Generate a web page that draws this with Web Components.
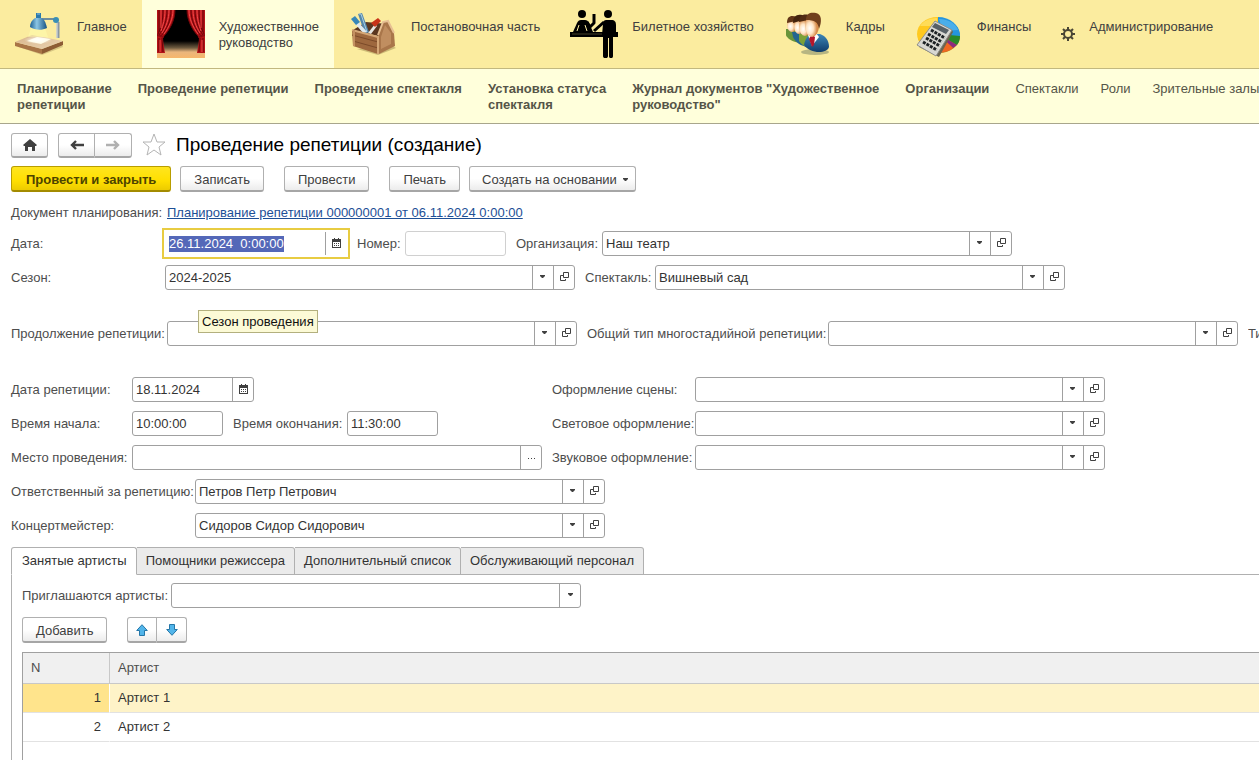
<!DOCTYPE html>
<html lang="ru">
<head>
<meta charset="UTF-8">
<title>Проведение репетиции (создание)</title>
<style>
  :root {
    --bar: #fbec9f;
    --bar-light: #ffffdb;
    --text: #404040;
    --label: #4d4d4d;
    --line: #a0a0a0;
    --accent: #e8cc42;
  }
  html, body { height: 100%; }
  body {
    margin: 0;
    overflow: hidden;
    background: #fff;
    color: var(--text);
    font: 13px/16px "Liberation Sans", Arial, sans-serif;
  }
</style>
</head>
<body>
<rehearsal-app></rehearsal-app>

<script>
const ICONS = {
  lamp: { size: [48, 48], body: `
    <defs>
      <linearGradient id="wood" x1="0" y1="0" x2="1" y2="1"><stop offset="0" stop-color="#d8b48a"/><stop offset="1" stop-color="#ead3b2"/></linearGradient>
      <linearGradient id="shade" x1="0" y1="0" x2="1" y2="0"><stop offset="0" stop-color="#1b5f94"/><stop offset=".4" stop-color="#8cc6e4"/><stop offset="1" stop-color="#155283"/></linearGradient>
      <radialGradient id="glow"><stop offset="0" stop-color="#fff"/><stop offset="1" stop-color="#fff" stop-opacity="0"/></radialGradient>
    </defs>
    <path d="M4 37 27 45 48 37 46 33z" fill="#b59f66" opacity=".5"/>
    <path d="M0 32v4l27 8v-5z" fill="#a87446"/><path d="M27 39v5l21-9v-4z" fill="#8d5c34"/>
    <path d="M0 32 17 25 48 31 27 39z" fill="url(#wood)"/>
    <path d="m12 31 10-4 14 2-10 5z" fill="#fffbe0"/>
    <ellipse cx="23" cy="30" rx="14" ry="4" fill="url(#glow)"/>
    <path d="M16 18 13 27h20l-3-9z" fill="#fffdb0" opacity=".5"/>
    <path d="M43 12v16" stroke="#8a97a3" stroke-width="3"/><path d="M42 12v16" stroke="#e0e6ea"/>
    <path d="M27 9h14" stroke="#708d9c" stroke-width="2"/>
    <circle cx="41" cy="10" r="3" fill="#3a8fb5"/>
    <path d="M21 3h5v6h-5z" fill="#2b79ac"/><path d="M22 4h3" stroke="#8ac2e0"/>
    <path d="M20 8h7c3 2 4 6 5 10-6 3-12 2-17-1 0-4 2-7 5-9z" fill="url(#shade)"/>` },
  curtain: { size: [48, 48], body: `
    <defs>
      <linearGradient id="floor" x1="0" y1="0" x2="0" y2="1"><stop offset="0" stop-color="#000"/><stop offset=".4" stop-color="#6e5b40"/><stop offset=".65" stop-color="#eab67c"/><stop offset="1" stop-color="#f7b76b"/></linearGradient>
      <g id="drape">
        <path d="M0 0h18c0 10-5 20-12 27 0 5 1 10 2 16H0z" fill="#b51217"/>
        <path d="M2 0v22M6 0c0 10-2 18-5 24M10 0c0 10-3 18-8 25M14 0c0 10-4 19-10 26M18 0c0 10-5 20-12 27M2 28v14M5 28l1 14" fill="none" stroke="#6a0509" stroke-width="1"/>
        <path d="M4 0v18M8 0c0 9-2 15-4 21M12 0c0 9-3 17-7 23M16 0c0 9-4 17-9 24M3 30v12" fill="none" stroke="#ef4b49" stroke-width="1"/>
        <path d="m0 25 7 2" stroke="#8d0a10" stroke-width="2"/>
      </g>
    </defs>
    <path d="M0 0h48v48H0z"/><path d="M0 31h48v17H0z" fill="url(#floor)"/>
    <use href="#drape"/><use href="#drape" transform="matrix(-1 0 0 1 48 0)"/>` },
  toolbox: { size: [48, 48], body: `
    <path d="m8 39 21 6 18-7-5-3z" fill="#a08a50" opacity=".5"/>
    <path d="m4 20 25 6 10-12L17 12z" fill="#5b3720"/>
    <path d="m9 4 4-1 7 19-4 2z" fill="#5587ab"/><path d="m10 4 2 0 6 18" fill="none" stroke="#a7cde2"/>
    <path d="m3 10 3-2 12 14-4 1z" fill="#dfe9ee"/><path d="m2 9 4-3 5 6-4 3z" fill="#3787b8"/>
    <path d="m19 23 7-9 2 2-6 8z" fill="#e7e7e2"/><path d="m22 13 7-5 3 3-6 6z" fill="#c73318"/>
    <path d="m29 25 5-13 5-1 6 12 1 13-16 8z" fill="#a9764a"/>
    <path d="m32 27 4-12 6 8v11l-10 5z" fill="#c08e60"/>
    <path d="m29 25 5-13 5-1 6 12" fill="none" stroke="#e7c093" stroke-width="2"/>
    <path d="M3 20 29 27v17L4 36z" fill="#9e683e"/>
    <path d="m3 25 26 7M4 31l25 7" stroke="#7b4a29"/><path d="M3 20 29 27v17" fill="none" stroke="#d5a777" stroke-width="2"/><path d="m5 20v16" stroke="#c39061" stroke-width="2"/>` },
  counter: { size: [48, 48], body: `
    <circle cx="12" cy="4" r="4"/><circle cx="38" cy="4" r="4"/>
    <path d="M0 22h48v5H0z"/>
    <path d="m3 22 4-9c1-2 2-3 4-3h4c2 0 3 1 4 3l4 9z"/>
    <path d="m17 12 3 5 4-4V4" fill="none" stroke="#000" stroke-width="3" stroke-linejoin="round"/>
    <path d="m24 21 10-9" stroke="#000" stroke-width="3"/>
    <path d="M33 14c0-3 1-4 4-4h4c4 0 5 2 5 5v10H32z"/>
    <path d="M33 27h10v19c0 3-4 3-4 0V28h-1v18c0 3-5 3-5 0z"/>
    <path d="m7 21 2-6m8 6-2-6" stroke="#fbec9f"/>
    <path d="M2 24h30" stroke="#45402a"/>` },
  people: { size: [48, 48], body: `
    <defs>
      <radialGradient id="face" cx=".35" cy=".6"><stop offset="0" stop-color="#fff"/><stop offset=".5" stop-color="#ffe6c8"/><stop offset="1" stop-color="#d88d4c"/></radialGradient>
      <linearGradient id="suit" x1="0" y1="0" x2="0" y2="1"><stop offset="0" stop-color="#3d87b7"/><stop offset="1" stop-color="#103c6b"/></linearGradient>
    </defs>
    <ellipse cx="31" cy="42" rx="14" ry="3" fill="#8b9170" opacity=".6"/>
    <path d="M2 19h11l5 14C8 33 2 27 2 25z" fill="#69943a"/><ellipse cx="8" cy="15" rx="5" ry="7" fill="url(#face)"/><path d="M3 13c0-7 4-8 10-6l-1 4z" fill="#613517"/>
    <path d="M8 22h13l4 15c-9 0-15-7-16-10z" fill="#24658f"/><ellipse cx="15" cy="16" rx="5" ry="8" fill="url(#face)"/><path d="M9 13c0-8 5-10 12-7l-2 4z" fill="#43240f"/>
    <path d="M15 24h12l4 15c-8 0-13-4-16-8z" fill="#7ca138"/><ellipse cx="21" cy="17" rx="6" ry="9" fill="url(#face)"/><path d="M15 12c0-8 6-9 13-6l-4 4z" fill="#512b13"/>
    <path d="M20 35c1-6 4-10 8-11h8c6 2 9 7 9 13-2 7-19 7-25-2z" fill="url(#suit)"/>
    <path d="m24 25 4 11 7-9-3-4z" fill="#fff"/><path d="m26 27 2-2 3 2-1 8-2 2-3-8z" fill="#b3172b"/>
    <ellipse cx="28" cy="16" rx="7" ry="11" fill="url(#face)"/><path d="M22 10c0-7 5-8 10-7 6 1 6 9 3 16-1-7-4-9-13-9z" fill="#71401d"/>` },
  finance: { size: [48, 48], body: `
    <ellipse cx="24" cy="26" rx="21" ry="17" fill="#b57b20"/>
    <path d="M23 24V7C10 7 2 15 2 24c0 4 2 8 5 11z" fill="#ffc91f"/><path d="M5 16c3-5 9-8 17-8v8z" fill="#ffe46f" opacity=".7"/>
    <path d="M23 24V7c12 0 21 8 22 17v3z" fill="#2495df"/><path d="M24 9c10 0 17 5 19 11l-15 1z" fill="#64bff2" opacity=".6"/>
    <path d="m23 24 22 2c0 4-1 6-3 9z" fill="#29892a"/><path d="m23 24 19 11-4 3z" fill="#8d2a80"/>
    <path d="m23 24 15 14c-4 4-11 5-17 4z" fill="#f06722"/>
    <path d="m4 37 20 10 14-25-1-2z" fill="#6b6550"/>
    <path d="M20 11 37 20 21 46 2 35z" fill="#d8d8d3" stroke="#8e8e89"/>
    <path d="m20 13 14 7-3 4-14-7z" fill="#576066"/>
    <path d="m16 20 14 8m-17-4 14 8M11 28l14 8M8 32l14 8" stroke="#1d2225" stroke-width="3" stroke-dasharray="3 1"/>` },
  gear: { size: [14, 14], body: `
    <path d="M7 0v3m0 8v3M0 7h3m8 0h3M2 2l2 2m6 6 2 2m0-10-2 2m-6 6-2 2" stroke="#4a4635" stroke-width="2"/>
    <circle cx="7" cy="7" r="4" fill="none" stroke="#4a4635" stroke-width="2"/>` },
  home: { size: [14, 12], body: `<path d="m7 0 7 6-1 1h-1v5H9V8H5v4H2V7H1L0 6z" fill="#404040"/>` },
  back: { size: [14, 10], body: `<path d="M14 5H2M6 1 2 5l4 4" fill="none" stroke="#404040" stroke-width="2.4"/>` },
  forward: { size: [14, 10], body: `<path d="M0 5h12M8 1l4 4-4 4" fill="none" stroke="#b0b0b0" stroke-width="2.4"/>` },
  star: { size: [24, 24], body: `<path d="m12 1 3 8h8l-6 5 2 8-7-5-7 5 2-8-6-5h8z" fill="#fff" stroke="#b4b4b4"/>` },
  caret: { size: [5, 3], body: `<path d="M0 0h5v1L3 3H2L0 1z" fill="#404040"/>` },
  open: { size: [9, 9], body: `<path d="M3 3.5H.5v5h5V7M3.5.5h5v5h-5z" fill="none" stroke="#404040"/>` },
  calendar: { size: [9, 10], body: `<path d="M0 1h9v9H0zM1 4v5h7V4z" fill="#404040" fill-rule="evenodd"/><path d="M2 0h1v2H2zM6 0h1v2H6zM2 5h1v1H2zM4 5h1v1H4zM6 5h1v1H6zM2 7h1v1H2zM4 7h1v1H4zM6 7h1v1H6z" fill="#404040"/>` },
  dots: { size: [7, 5], body: `<path d="M0 4h1v1H0zM3 4h1v1H3zM6 4h1v1H6z" fill="#404040"/>` },
  up: { size: [12, 12], body: `<path d="m6 .7 5.3 5.8H8.5v5h-5v-5H.7z" fill="#52b5ea" stroke="#2577a8"/>` },
  down: { size: [12, 12], body: `<path d="M6 11.3.7 5.5h2.8v-5h5v5h2.8z" fill="#52b5ea" stroke="#2577a8"/>` }
};

class AppIcon extends HTMLElement {
  connectedCallback() {
    if (this.shadowRoot) return;
    this.attachShadow({ mode: 'open' });
    const icon = ICONS[this.getAttribute('name')];
    const [w, h] = icon.size;
    this.shadowRoot.innerHTML = `
      <style>
        :host { display: block; flex: none; width: ${w}px; height: ${h}px; }
        svg { display: block; }
      </style>
      <svg width="${w}" height="${h}" viewBox="0 0 ${w} ${h}" aria-hidden="true">${icon.body}</svg>
    `;
  }
}
customElements.define('app-icon', AppIcon);

class SectionItem extends HTMLElement {
  connectedCallback() {
    if (this.shadowRoot) return;
    this.attachShadow({ mode: 'open' });
    this.shadowRoot.innerHTML = `
      <style>
        :host { display: block; flex: none; }
        a {
          display: flex;
          gap: 14px;
          box-sizing: border-box;
          height: 68px;
          padding: 10px 15px;
          color: var(--text);
          text-decoration: none;
          white-space: nowrap;
        }
        :host([active]) a { background: var(--bar-light); }
        app-icon { align-self: center; }
        span { padding-top: 9px; }
      </style>
      <a href="#"><app-icon name="${this.getAttribute('icon')}"></app-icon><span><slot></slot></span></a>
    `;
  }
}
customElements.define('section-item', SectionItem);

class SectionPanel extends HTMLElement {
  connectedCallback() {
    if (this.shadowRoot) return;
    this.attachShadow({ mode: 'open' });
    this.shadowRoot.innerHTML = `
      <style>
        :host { display: block; background: var(--bar); border-bottom: 1px solid #c2b87f; }
        nav { display: flex; }
      </style>
      <nav aria-label="Разделы"><slot></slot></nav>
    `;
  }
}
customElements.define('section-panel', SectionPanel);

class FunctionPanel extends HTMLElement {
  connectedCallback() {
    if (this.shadowRoot) return;
    this.attachShadow({ mode: 'open' });
    this.shadowRoot.innerHTML = `
      <style>
        :host { display: block; background: var(--bar-light); border-bottom: 1px solid #a8a68c; }
        nav { display: flex; gap: 22px; height: 32px; padding: 12px 0 10px 17px; white-space: nowrap; }
        ::slotted(a) { flex: none; color: #555548; text-decoration: none; }
        ::slotted(a.main) { padding-right: 4px; font-weight: bold; }
      </style>
      <nav aria-label="Команды раздела"><slot></slot></nav>
    `;
  }
}
customElements.define('function-panel', FunctionPanel);

class AppButton extends HTMLElement {
  connectedCallback() {
    if (this.shadowRoot) return;
    this.attachShadow({ mode: 'open' });
    const icon = this.getAttribute('icon');
    const title = this.getAttribute('label');
    this.shadowRoot.innerHTML = `
      <style>
        :host { display: block; flex: none; }
        button {
          display: flex;
          align-items: center;
          justify-content: center;
          gap: 6px;
          box-sizing: border-box;
          width: 100%;
          height: 26px;
          padding: 2px 13px 0;
          border: 1px solid #b0b0b0;
          border-bottom: 2px solid #a6a6a6;
          border-radius: 3px;
          background: linear-gradient(#fff 50%, #ececec);
          color: var(--text);
          font: inherit;
          white-space: nowrap;
        }
        :host([small]) button { height: 25px; padding: 0; }
        :host([menu]) button { padding: 2px 7px 0 12px; }
        :host([primary]) button {
          padding: 2px 14px 0;
          border-color: #b89d00 #b89d00 #a38b00;
          background: linear-gradient(#ffe51f, #ffdf00 60%, #eccb00);
          color: #4d4300;
          font-weight: bold;
        }
        :host([joined]) button { padding: 0; }
        :host([joined=left]) button { border-radius: 3px 0 0 3px; }
        :host([joined=right]) button { border-left: 0; border-radius: 0 3px 3px 0; }
      </style>
      <button type="button" ${title ? `aria-label="${title}"` : ''}>${icon ? `<app-icon name="${icon}"></app-icon>` : ''}<slot></slot>${this.hasAttribute('menu') ? '<app-icon name="caret"></app-icon>' : ''}</button>
    `;
  }
}
customElements.define('app-button', AppButton);

const FIELD_BUTTONS = {
  caret: 'Выбрать из списка',
  open: 'Открыть',
  calendar: 'Календарь',
  dots: 'Выбрать'
};

class FormField extends HTMLElement {
  connectedCallback() {
    if (this.shadowRoot) return;
    this.attachShadow({ mode: 'open' });
    const buttons = (this.getAttribute('buttons') || '').split(' ').filter(Boolean);
    this.shadowRoot.innerHTML = `
      <style>
        :host { display: flex; flex: none; align-items: center; }
        label { flex: none; width: var(--label-width, auto); color: var(--label); white-space: nowrap; }
        .box {
          display: flex;
          box-sizing: border-box;
          width: var(--field-width, 410px);
          height: 25px;
          border: 1px solid var(--line);
          border-radius: 3px;
          background: #fff;
        }
        input {
          flex: 1;
          min-width: 0;
          padding: 0 3px;
          border: 0;
          outline: 0;
          background: none;
          color: #333;
          font: inherit;
        }
        input::selection { background: #5468b8; color: #fff; }
        button {
          display: flex;
          align-items: center;
          justify-content: center;
          box-sizing: border-box;
          width: 21px;
          padding: 0 1px 2px 0;
          border: 0;
          border-left: 1px solid var(--line);
          background: none;
        }
        button:last-child { padding-right: 0; }
        :host([muted]) .box { border-color: #d0d0d0; }
        :host([current]) .box { border-color: transparent; outline: 2px solid var(--accent); outline-offset: 1px; border-radius: 0; }
      </style>
      <label for="field">${this.getAttribute('label')}:</label>
      <div class="box">
        <input id="field" type="text" autocomplete="off" spellcheck="false" value="${this.getAttribute('value') || ''}">
        ${buttons.map(b => `<button type="button" aria-label="${FIELD_BUTTONS[b]}"><app-icon name="${b}"></app-icon></button>`).join('')}
      </div>
    `;
    if (this.hasAttribute('current')) {
      const input = this.shadowRoot.querySelector('input');
      input.focus();
      input.select();
    }
  }
}
customElements.define('form-field', FormField);

class HintBox extends HTMLElement {
  connectedCallback() {
    if (this.shadowRoot) return;
    this.attachShadow({ mode: 'open' });
    this.shadowRoot.innerHTML = `
      <style>
        :host {
          display: block;
          padding: 3px;
          border: 1px solid #b3b07e;
          background: #fcfad6;
          color: #111;
          line-height: 15px;
          white-space: nowrap;
        }
      </style>
      <div role="tooltip"><slot></slot></div>
    `;
  }
}
customElements.define('hint-box', HintBox);

class TabPages extends HTMLElement {
  connectedCallback() {
    if (this.shadowRoot) return;
    this.attachShadow({ mode: 'open' });
    const tabs = this.getAttribute('tabs').split('|');
    this.shadowRoot.innerHTML = `
      <style>
        :host { display: flex; flex-direction: column; }
        .tabs { display: flex; box-shadow: inset 0 -1px #b0b0b0; }
        button {
          height: 28px;
          padding: 0 9px;
          border: 1px solid #b0b0b0;
          border-left-width: 0;
          border-radius: 0 3px 0 0;
          background: #ebebeb;
          color: #333;
          font: inherit;
          white-space: nowrap;
        }
        button:first-child { padding-left: 10px; border-left-width: 1px; border-top-left-radius: 3px; }
        button[aria-selected=true] { background: #fff; border-bottom-color: #fff; }
        .page {
          display: flex;
          flex: 1;
          flex-direction: column;
          gap: 9px;
          padding: 8px 0 0 10px;
          border-left: 1px solid #b0b0b0;
        }
      </style>
      <div class="tabs" role="tablist">
        ${tabs.map((t, i) => `<button type="button" role="tab" aria-selected="${i === 0}">${t}</button>`).join('')}
      </div>
      <div class="page" role="tabpanel"><slot></slot></div>
    `;
    const buttons = this.shadowRoot.querySelectorAll('[role=tab]');
    buttons.forEach(btn => btn.addEventListener('click', () => {
      buttons.forEach(b => b.setAttribute('aria-selected', b === btn));
    }));
  }
}
customElements.define('tab-pages', TabPages);

class ArtistTable extends HTMLElement {
  connectedCallback() {
    if (this.shadowRoot) return;
    this.attachShadow({ mode: 'open' });
    const rows = this.getAttribute('rows').split('|');
    this.shadowRoot.innerHTML = `
      <style>
        :host { display: block; border: 1px solid var(--line); border-width: 1px 0 0 1px; }
        table { width: 100%; border-collapse: separate; border-spacing: 0; table-layout: fixed; }
        th {
          height: 30px;
          padding: 0 8px;
          border-bottom: 1px solid #c8c8c8;
          background: #f0f0f0;
          color: var(--label);
          font-weight: normal;
          text-align: left;
        }
        th:first-child { width: 70px; border-right: 1px solid #c8c8c8; }
        td { height: 28px; padding: 0 8px; border-bottom: 1px solid #e2e2e2; color: #333; }
        td:first-child { border-right: 1px solid #fff; text-align: right; }
        tr.current td { background: #fef3c8; }
        tr.current td:first-child { background: #ffe48c; }
      </style>
      <table>
        <thead><tr><th>N</th><th>Артист</th></tr></thead>
        <tbody>
          ${rows.map((r, i) => `<tr class="${i === 0 ? 'current' : ''}"><td>${i + 1}</td><td>${r}</td></tr>`).join('')}
        </tbody>
      </table>
    `;
  }
}
customElements.define('artist-table', ArtistTable);

class RehearsalApp extends HTMLElement {
  connectedCallback() {
    if (this.shadowRoot) return;
    this.attachShadow({ mode: 'open' });
    this.shadowRoot.innerHTML = `
      <style>
        :host { display: flex; flex-direction: column; height: 100%; }
        main { display: flex; flex: 1; flex-direction: column; padding: 8px 0 0 11px; }
        header, .commands, .row, .group { display: flex; }
        header { align-items: center; gap: 10px; height: 26px; }
        h1 { margin: 0; color: #000; font-size: 19px; line-height: 24px; font-weight: normal; }
        .commands { gap: 9px; margin-top: 8px; }
        .spaced { margin-left: 11px; }
        .home, .nav-step { width: 37px; }
        .row { position: relative; gap: 10px; margin-bottom: 9px; }
        .row.apart { margin-bottom: 31px; }
        .row.plan { gap: 0; margin: 13px 0 10px; }
        .plan span { width: 156px; color: var(--label); }
        .plan a { color: #1d4f96; }
        .more { flex: 0 1 auto; min-width: 0; overflow: hidden; line-height: 25px; color: var(--label); white-space: nowrap; }
        .columns { display: flex; gap: 10px; }
        .columns .left { width: 531px; }
        hint-box { position: absolute; left: 187px; top: 45px; z-index: 1; }
        tab-pages { flex: 1; }
        artist-table { flex: 1; }
        .l-head { --label-width: 154px; }
        .l-long { --label-width: 156px; }
        .l-time { --label-width: 121px; }
        .l-staff { --label-width: 184px; }
        .l-design { --label-width: 143px; }
        .arrow { width: 30px; }
      </style>
      <section-panel>
        <section-item icon="lamp">Главное</section-item>
        <section-item icon="curtain" active>Художественное<br>руководство</section-item>
        <section-item icon="toolbox">Постановочная часть</section-item>
        <section-item icon="counter">Билетное хозяйство</section-item>
        <section-item icon="people">Кадры</section-item>
        <section-item icon="finance">Финансы</section-item>
        <section-item icon="gear">Администрирование</section-item>
      </section-panel>
      <function-panel>
        <a href="#" class="main">Планирование<br>репетиции</a>
        <a href="#" class="main">Проведение репетиции</a>
        <a href="#" class="main">Проведение спектакля</a>
        <a href="#" class="main">Установка статуса<br>спектакля</a>
        <a href="#" class="main">Журнал документов "Художественное<br>руководство"</a>
        <a href="#" class="main">Организации</a>
        <a href="#">Спектакли</a>
        <a href="#">Роли</a>
        <a href="#">Зрительные залы</a>
      </function-panel>
      <main>
        <header>
          <app-button class="home" small icon="home" label="Начальная страница"></app-button>
          <div class="group">
            <app-button class="nav-step" small joined="left" icon="back" label="Назад"></app-button>
            <app-button class="nav-step" small joined="right" icon="forward" label="Вперед"></app-button>
          </div>
          <app-icon name="star"></app-icon>
          <h1>Проведение репетиции (создание)</h1>
        </header>
        <div class="commands">
          <app-button primary>Провести и закрыть</app-button>
          <app-button>Записать</app-button>
          <app-button class="spaced">Провести</app-button>
          <app-button class="spaced">Печать</app-button>
          <app-button menu>Создать на основании</app-button>
        </div>
        <div class="row plan"><span>Документ планирования:</span><a href="#">Планирование репетиции 000000001 от 06.11.2024 0:00:00</a></div>
        <div class="row">
          <form-field class="l-head" style="--field-width: 182px" label="Дата" value="26.11.2024  0:00:00" buttons="calendar" current></form-field>
          <form-field style="--label-width: 48px; --field-width: 101px" label="Номер" muted></form-field>
          <form-field style="--label-width: 86px" label="Организация" value="Наш театр" buttons="caret open"></form-field>
        </div>
        <div class="row apart">
          <form-field class="l-head" label="Сезон" value="2024-2025" buttons="caret open"></form-field>
          <form-field style="--label-width: 70px" label="Спектакль" value="Вишневый сад" buttons="caret open"></form-field>
          <hint-box>Сезон проведения</hint-box>
        </div>
        <div class="row apart">
          <form-field class="l-long" label="Продолжение репетиции" buttons="caret open"></form-field>
          <form-field style="--label-width: 241px" label="Общий тип многостадийной репетиции" buttons="caret open"></form-field>
          <span class="more">Ти</span>
        </div>
        <div class="columns">
          <div class="left">
            <div class="row"><form-field class="l-time" style="--field-width: 122px" label="Дата репетиции" value="18.11.2024" buttons="calendar"></form-field></div>
            <div class="row">
              <form-field class="l-time" style="--field-width: 91px" label="Время начала" value="10:00:00"></form-field>
              <form-field style="--label-width: 114px; --field-width: 91px" label="Время окончания" value="11:30:00"></form-field>
            </div>
            <div class="row"><form-field class="l-time" label="Место проведения" buttons="dots"></form-field></div>
          </div>
          <div class="right">
            <div class="row"><form-field class="l-design" label="Оформление сцены" buttons="caret open"></form-field></div>
            <div class="row"><form-field class="l-design" label="Световое оформление" buttons="caret open"></form-field></div>
            <div class="row"><form-field class="l-design" label="Звуковое оформление" buttons="caret open"></form-field></div>
          </div>
        </div>
        <div class="row"><form-field class="l-staff" label="Ответственный за репетицию" value="Петров Петр Петрович" buttons="caret open"></form-field></div>
        <div class="row"><form-field class="l-staff" label="Концертмейстер" value="Сидоров Сидор Сидорович" buttons="caret open"></form-field></div>
        <tab-pages tabs="Занятые артисты|Помощники режиссера|Дополнительный список|Обслуживающий персонал">
          <form-field style="--label-width: 149px" label="Приглашаются артисты" buttons="caret"></form-field>
          <div class="group" style="gap: 20px">
            <app-button>Добавить</app-button>
            <div class="group">
              <app-button class="arrow" joined="left" icon="up" label="Переместить вверх"></app-button>
              <app-button class="arrow" joined="right" icon="down" label="Переместить вниз"></app-button>
            </div>
          </div>
          <artist-table rows="Артист 1|Артист 2"></artist-table>
        </tab-pages>
      </main>
    `;
  }
}
customElements.define('rehearsal-app', RehearsalApp);
</script>
</body>
</html>
